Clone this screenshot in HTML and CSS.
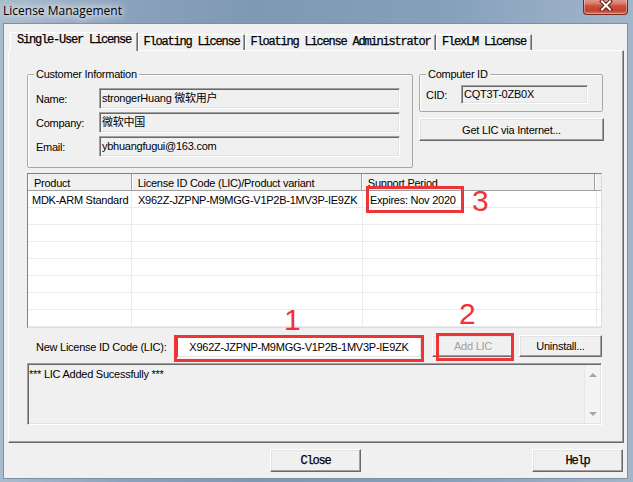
FILE: index.html
```html
<!doctype html>
<html lang="en">
  <head>
    <meta charset="utf-8">
    <title>License Management</title>
    <link rel="stylesheet" href="styles.css">
  </head>
  <body>
    <div class="window">
      <div class="titlebar">
        <span class="title">License Management</span>
        <div class="close-x">
          <svg width="14" height="11" viewBox="0 0 14 11">
            <path d="M3 1.5 L11 9.5 M11 1.5 L3 9.5" stroke="#5b1f19" stroke-width="4" stroke-linecap="square"/>
            <path d="M3 1.5 L11 9.5 M11 1.5 L3 9.5" stroke="#fff" stroke-width="2" stroke-linecap="square"/>
          </svg>
        </div>
      </div>

      <div class="client">
        <div class="tabs">
          <div class="tab active">Single-User License</div>
          <div class="tab t2">Floating License</div>
          <div class="tab t3">Floating License Administrator</div>
          <div class="tab t4">FlexLM License</div>
        </div>

        <div class="panel">
          <div class="top-row">
            <fieldset class="group customer">
              <legend>Customer Information</legend>
              <div class="fields">
                <div class="field"><label>Name:</label><div class="edit">strongerHuang 微软用户</div></div>
                <div class="field"><label>Company:</label><div class="edit">微软中国</div></div>
                <div class="field"><label>Email:</label><div class="edit">ybhuangfugui@163.com</div></div>
              </div>
            </fieldset>
            <div class="right-col">
              <fieldset class="group computer">
                <legend>Computer ID</legend>
                <div class="field cid-row"><label>CID:</label><div class="edit cid">CQT3T-0ZB0X</div></div>
              </fieldset>
              <div class="btn get-lic">Get LIC via Internet...</div>
            </div>
          </div>

          <div class="listview">
            <div class="lv-head">
              <div class="col c1">Product</div>
              <div class="col c2">License ID Code (LIC)/Product variant</div>
              <div class="col c3">Support Period</div>
              <div class="col filler"></div>
            </div>
            <div class="lv-row">
              <div class="col c1">MDK-ARM Standard</div>
              <div class="col c2">X962Z-JZPNP-M9MGG-V1P2B-1MV3P-IE9ZK</div>
              <div class="col c3">Expires: Nov 2020</div>
            </div>
            <div class="lv-row"><div class="col c1"></div><div class="col c2"></div><div class="col c3"></div></div>
            <div class="lv-row"><div class="col c1"></div><div class="col c2"></div><div class="col c3"></div></div>
            <div class="lv-row"><div class="col c1"></div><div class="col c2"></div><div class="col c3"></div></div>
            <div class="lv-row"><div class="col c1"></div><div class="col c2"></div><div class="col c3"></div></div>
            <div class="lv-row"><div class="col c1"></div><div class="col c2"></div><div class="col c3"></div></div>
            <div class="lv-row"><div class="col c1"></div><div class="col c2"></div><div class="col c3"></div></div>
            <div class="lv-row"><div class="col c1"></div><div class="col c2"></div><div class="col c3"></div></div>
          </div>

          <div class="new-row">
            <label>New License ID Code (LIC):</label>
            <div class="edit lic">X962Z-JZPNP-M9MGG-V1P2B-1MV3P-IE9ZK</div>
            <div class="btn add disabled">Add LIC</div>
            <div class="btn uninstall">Uninstall...</div>
          </div>

          <div class="log">
            <div class="log-text">*** LIC Added Sucessfully ***</div>
            <div class="vscroll">
              <span class="arrow up"></span>
              <span class="arrow down"></span>
            </div>
          </div>
        </div>

        <div class="footer">
          <div class="btn mono">Close</div>
          <div class="btn mono">Help</div>
        </div>
      </div>

      <!-- red annotations drawn over the dialog -->
      <div class="mark box3"></div>
      <div class="mark box1"></div>
      <div class="mark box2"></div>
      <div class="digit d1">1</div>
      <div class="digit d2">2</div>
      <div class="digit d3">3</div>
    </div>
  </body>
</html>
```

FILE: styles.css
```css
body {
  margin: 0;
  width: 633px;
  height: 482px;
  overflow: hidden;
  font-family: "Liberation Sans", Arial, "Noto Sans CJK SC", sans-serif;
  font-size: 11px;
  letter-spacing: -0.25px;
  color: #000;
  background: linear-gradient(to right, #a9bccf 0, #8aa2bc 20%, #7f98b4 40%, #86a0bb 70%, #a2b6ca 100%);
}

.window {
  position: relative;
  width: 633px;
  height: 482px;
}

/* title bar */
.titlebar {
  height: 23px;
}

.title {
  display: inline-block;
  margin: 3px 0 0 3px;
  font-family: "Open Sans", "Noto Sans", sans-serif;
  font-size: 12px;
  line-height: 15px;
  letter-spacing: 0;
  color: #000;
  text-shadow: 0 0 6px #fff, 0 0 10px rgba(255,255,255,.9), 0 0 14px rgba(255,255,255,.7);
}

.close-x {
  position: absolute;
  left: 583px;
  top: -4px;
  width: 45px;
  height: 19px;
  border: 1px solid #6e2a22;
  border-top: 0;
  border-radius: 0 0 4px 4px;
  background: linear-gradient(to bottom, #eab1a2 0, #d98170 40%, #c9503d 55%, #c4422f 80%, #d4705d 100%);
  box-shadow: inset 0 0 0 1px rgba(255,255,255,.35);
  display: flex;
  justify-content: center;
  align-items: flex-end;
  padding-bottom: 3px;
  box-sizing: border-box;
}

/* client area */
.client {
  margin: 0 5px 0 3px;
  height: 456px;
  box-sizing: border-box;
  border: 1px solid #7d8fa4;
  background: #f0f0f0;
}

.tabs {
  display: flex;
  align-items: flex-end;
  height: 18px;
  margin: 8px 0 0 6px;
}

.tab {
  height: 16px;
  box-sizing: border-box;
  border: 1px solid;
  border-color: #fff #696969 transparent #fff;
  border-bottom: 0;
  box-shadow: inset -1px 0 #a0a0a0;
  font-family: "Liberation Mono", "Courier New", monospace;
  font-size: 12px;
  letter-spacing: -1.2px;
  line-height: 14px;
  text-align: center;
  -webkit-text-stroke: 0.25px #000;
  background: #f0f0f0;
}

.tab.active {
  position: relative;
  z-index: 1;
  width: 128px;
  height: 19px;
  margin-bottom: -1px;
}

.t2 { width: 107px; }
.t3 { width: 191px; }
.t4 { width: 96px; }

.panel {
  margin-left: 4px;
  width: 616px;
  height: 393px;
  box-sizing: border-box;
  border: 1px solid;
  border-color: #fff #696969 #696969 #fff;
  box-shadow: inset -1px -1px #a0a0a0;
  padding: 16px 18px 0 18px;
}

/* group boxes */
.top-row {
  display: flex;
  gap: 6px;
}

fieldset.group {
  margin: 0;
  min-width: 0;
  box-sizing: border-box;
  border: 1px solid #a8a8a8;
  border-radius: 2px;
  box-shadow: inset 1px 1px #fff;
}

fieldset.group legend {
  padding: 0 2px;
  line-height: 14px;
  background: #f0f0f0;
}

.customer {
  width: 386px;
  padding: 7px 12px 10px 8px;
}

.customer legend {
  margin-left: -2px;
}

.fields {
  display: flex;
  flex-direction: column;
  gap: 3px;
}

.field {
  display: flex;
  align-items: center;
  height: 21px;
}

.field label {
  width: 63px;
  padding-top: 1px;
}

.edit {
  box-sizing: border-box;
  height: 21px;
  border: 1px solid;
  border-color: #a0a0a0 #fff #fff #a0a0a0;
  box-shadow: inset 1px 1px #696969, inset -1px -1px #e3e3e3;
  padding: 0 2px;
  line-height: 19px;
  white-space: nowrap;
  overflow: hidden;
  background: #f0f0f0;
}

.customer .edit {
  width: 301px;
}

.right-col {
  width: 185px;
  display: flex;
  flex-direction: column;
}

.computer {
  width: 184px;
  padding: 4px 14px 7px 6px;
}

.cid-row {
  height: 19px;
}

.cid-row label {
  width: 35px;
}

.edit.cid {
  width: 127px;
  height: 19px;
  line-height: 17px;
}

/* buttons */
.btn {
  box-sizing: border-box;
  height: 23px;
  border: 1px solid;
  border-color: #fff #696969 #696969 #fff;
  box-shadow: inset -1px -1px #a0a0a0, inset 1px 1px #e3e3e3;
  background: #f0f0f0;
  display: flex;
  align-items: center;
  justify-content: center;
  white-space: nowrap;
}

.get-lic {
  margin-top: 6px;
}

.btn.disabled {
  color: #a0a0a0;
}

.btn.mono {
  width: 91px;
  font-family: "Liberation Mono", "Courier New", monospace;
  font-size: 12px;
  letter-spacing: -1.2px;
  -webkit-text-stroke: 0.25px #000;
}

/* list view */
.listview {
  margin-top: 5px;
  width: 575px;
  height: 155px;
  box-sizing: border-box;
  border: 1px solid;
  border-color: #828282 #dcdcdc #dcdcdc #828282;
  background: #fff;
}

.lv-head {
  display: flex;
  height: 17px;
  box-sizing: border-box;
  border-bottom: 1px solid #a0a0a0;
  background: #f0f0f0;
}

.col {
  box-sizing: border-box;
  padding-top: 2px;
  padding-left: 6px;
  line-height: 14px;
  white-space: nowrap;
  overflow: hidden;
}

.lv-head .col {
  border-right: 1px solid #a0a0a0;
  box-shadow: inset 1px 0 #fff;
}

.c1 { width: 104px; }
.c2 { width: 231px; }
.c3 { width: 234px; }
.lv-head .filler { flex: 1; border-right: 0; }

.lv-row {
  display: flex;
  height: 17px;
  box-sizing: border-box;
  border-bottom: 1px solid #ececec;
}

.lv-row .col {
  border-right: 1px solid #ececec;
}

.lv-row .c1 { padding-left: 4px; }
.lv-row .c2 { padding-left: 6px; }
.lv-row .c3 { padding-left: 7px; }

/* new license row */
.new-row {
  display: flex;
  align-items: flex-start;
  height: 23px;
  margin-top: 7px;
  padding-left: 9px;
}

.new-row label {
  width: 140px;
  line-height: 24px;
}

.edit.lic {
  width: 246px;
  height: 22px;
  margin-top: 1px;
  line-height: 20px;
  text-align: center;
  background: #fff;
}

.btn.add {
  width: 82px;
  height: 22px;
  margin-left: 10px;
}

.btn.uninstall {
  width: 83px;
  height: 22px;
  margin-left: 5px;
}

/* log box */
.log {
  display: flex;
  margin-top: 5px;
  width: 575px;
  height: 62px;
  box-sizing: border-box;
  border: 1px solid;
  border-color: #a0a0a0 #fff #fff #a0a0a0;
  box-shadow: inset 1px 1px #696969, inset -1px -1px #e3e3e3;
  background: #f0f0f0;
}

.log-text {
  flex: 1;
  padding: 3px 0 0 1px;
  line-height: 14px;
}

.vscroll {
  width: 15px;
  margin: 1px 1px 1px 0;
  background: #f4f4f4;
  border-left: 1px solid #e6e6e6;
  display: flex;
  flex-direction: column;
  justify-content: space-between;
  align-items: center;
  padding: 8px 0 7px;
}

.arrow {
  width: 0;
  height: 0;
  border-left: 4px solid transparent;
  border-right: 4px solid transparent;
}

.arrow.up { border-bottom: 4px solid #a8a8a8; }
.arrow.down { border-top: 4px solid #a8a8a8; }

/* footer */
.footer {
  display: flex;
  gap: 171px;
  margin-top: 6px;
  padding-left: 266px;
}

/* annotations */
.mark {
  position: absolute;
  border: 3px solid #ee3535;
  box-sizing: border-box;
}

.box3 { left: 366px; top: 186px; width: 98px; height: 27px; }
.box1 { left: 174px; top: 335px; width: 250px; height: 27px; }
.box2 { left: 436px; top: 333px; width: 78px; height: 28px; }

.digit {
  position: absolute;
  font-family: "Liberation Sans", Arial, sans-serif;
  font-size: 30px;
  line-height: 30px;
  letter-spacing: 0;
  color: #ee3535;
}

.d1 { left: 284px; top: 305px; }
.d2 { left: 459px; top: 299px; }
.d3 { left: 472px; top: 186px; }
```
